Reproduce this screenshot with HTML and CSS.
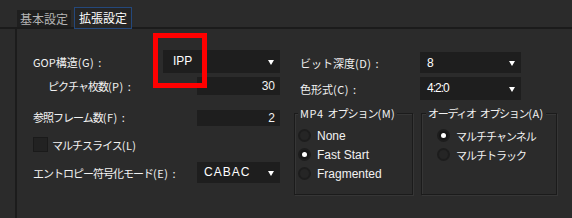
FILE: index.html
```html
<!DOCTYPE html>
<html lang="ja">
<head>
<meta charset="utf-8">
<title>拡張設定</title>
<link rel="stylesheet" href="styles.css">
</head>
<body>

<div class="tabs">
  <span class="tab">基本設定</span>
  <span class="tab active">拡張設定</span>
</div>

<div class="panel">

  <div class="col-left">
    <div class="row row-gop">
      <span class="label">GOP構造<span class="key">(G) :</span></span>
      <div class="select select-gop">IPP<i class="arrow"></i></div>
    </div>
    <div class="row row-pics">
      <span class="label tight indent">ピクチャ枚数<span class="key">(P) :</span></span>
      <div class="num">30</div>
    </div>
    <div class="row row-ref">
      <span class="label tight">参照フレーム数<span class="key">(F) :</span></span>
      <div class="num">2</div>
    </div>
    <div class="row row-check">
      <span class="checkbox"></span>
      <span class="label tight">マルチスライス<span class="key">(L)</span></span>
    </div>
    <div class="row row-entropy">
      <span class="label tight">エントロピー符号化モード<span class="key">(E) :</span></span>
      <div class="select select-entropy">CABAC<i class="arrow"></i></div>
    </div>
  </div>

  <div class="col-right">
    <div class="row row-depth">
      <span class="label">ビット深度<span class="key">(D) :</span></span>
      <div class="select select-right">8<i class="arrow"></i></div>
    </div>
    <div class="row row-color">
      <span class="label">色形式<span class="key">(C) :</span></span>
      <div class="select select-right narrow">4:2:0<i class="arrow"></i></div>
    </div>

    <div class="groups">
      <div class="group group-mp4">
        <span class="group-title tight"><span class="key">MP4 </span>オプション<span class="key">(M)</span></span>
        <div class="radio"><span class="dot"></span>None</div>
        <div class="radio"><span class="dot on"></span>Fast Start</div>
        <div class="radio"><span class="dot"></span>Fragmented</div>
      </div>
      <div class="group group-audio">
        <span class="group-title tight">オーディオ<span class="key"> </span>オプション<span class="key">(A)</span></span>
        <div class="radio tight"><span class="dot on"></span>マルチチャンネル</div>
        <div class="radio tight"><span class="dot"></span>マルチトラック</div>
      </div>
    </div>
  </div>

  <!-- red annotation box drawn over the GOP dropdown -->
  <div class="highlight"></div>

</div>

</body>
</html>
```

FILE: styles.css
```css
html, body {
  margin: 0;
  padding: 0;
}
body {
  width: 572px;
  height: 218px;
  overflow: hidden;
  background-color: #2b2b2b;
  color: #f2f2f2;
  font-family: "Noto Sans CJK JP", "Noto Sans", sans-serif;
  font-size: 11px;
  line-height: 14px;
}
.tight {
  letter-spacing: -1px;
}
/* latin accelerator part of a label, e.g. "(G) :" */
.key {
  letter-spacing: 0.5px;
  word-spacing: 1px;
}

/* tab strip */
.tabs {
  display: flex;
  align-items: flex-end;
  gap: 3px;
  height: 27px;
  padding-left: 17px;
  border-bottom: 2px solid #1b1b1b;
  font-size: 12px;
}
.tab {
  height: 17px;
  padding: 0 3px;
  background-color: #1f1f1f;
  color: #b4b4b4;
  line-height: 17px;
}
.tab.active {
  height: 20px;
  margin-bottom: -2px;
  padding: 0 4px;
  border: 1px solid #24487c;
  background-color: #262626;
  color: #ffffff;
  line-height: 20px;
}

/* panel */
.panel {
  position: relative;
  display: flex;
  height: 189px;
  margin-left: 15px;
  border-left: 2px solid #1c1c1c;
}

.row {
  display: flex;
  align-items: center;
}
.label {
  white-space: nowrap;
}
.indent {
  padding-left: 15px;
}

/* left column */
.col-left {
  width: 247px;
  padding: 21px 0 0 16px;
}
.row-gop {
  height: 23px;
}
.row-gop .label {
  width: 130px;
}
.row-pics {
  height: 18px;
  margin-top: 4px;
}
.row-ref {
  height: 16px;
  margin-top: 15px;
  align-items: flex-start;
}
.row-check {
  height: 15px;
  margin-top: 11px;
}
.row-entropy {
  height: 21px;
  margin-top: 10px;
}

.select {
  position: relative;
  box-sizing: border-box;
  height: 100%;
  background-color: #1e1e1e;
  font-family: "Liberation Sans", sans-serif;
  font-size: 12px;
  line-height: 23px;
  color: #ffffff;
}
.select-gop {
  width: 117px;
  padding-left: 10px;
}
.select-entropy {
  width: 83px;
  margin-left: auto;
  padding-left: 7px;
  line-height: 21px;
  letter-spacing: 1px;
}
.arrow {
  position: absolute;
  right: 6px;
  top: 50%;
  margin-top: -2px;
  border-left: 3px solid transparent;
  border-right: 3px solid transparent;
  border-top: 5px solid #ffffff;
}
.num {
  box-sizing: border-box;
  width: 83px;
  height: 100%;
  margin-left: auto;
  padding-right: 5px;
  background-color: #1e1e1e;
  font-family: "Liberation Sans", sans-serif;
  font-size: 12px;
  text-align: right;
  line-height: 18px;
}
.row-ref .num {
  line-height: 16px;
}
.checkbox {
  box-sizing: border-box;
  width: 15px;
  height: 15px;
  margin-right: 4px;
  background-color: #222222;
  border: 1px solid #1a1a1a;
}

/* right column */
.col-right {
  width: 263px;
  margin-left: 14px;
  padding-top: 23px;
}
.col-right .label {
  width: 120px;
  padding-left: 6px;
}
.row-depth {
  height: 21px;
}
.row-color {
  height: 23px;
  margin-top: 4px;
}
.select-right {
  width: 101px;
  padding-left: 7px;
  line-height: 22px;
}
.select-right.narrow {
  letter-spacing: -1px;
}

.groups {
  display: flex;
  gap: 8px;
  margin-top: 13px;
}
.group {
  box-sizing: border-box;
  height: 82px;
  border: 1px solid #1b1b1b;
  box-shadow: inset 1px 1px 0 #363636, 1px 1px 0 #363636;
}
.group-mp4 {
  width: 119px;
  padding-left: 3px;
}
.group-audio {
  width: 136px;
  padding-left: 15px;
}
.group-title {
  display: block;
  width: fit-content;
  margin: -8px 0 0 0;
  padding: 0 2px;
  background-color: #2b2b2b;
  white-space: nowrap;
}
.group-audio .group-title {
  margin-left: -11px;
  letter-spacing: -1.3px;
}
.radio {
  display: flex;
  align-items: center;
  height: 13px;
  margin-top: 6px;
  font-family: "Liberation Sans", "Noto Sans CJK JP", sans-serif;
  font-size: 12px;
  white-space: nowrap;
}
.radio.tight {
  font-family: "Noto Sans CJK JP", sans-serif;
  font-size: 11px;
}
.group-title + .radio {
  margin-top: 9px;
}
.dot {
  position: relative;
  flex: none;
  box-sizing: border-box;
  width: 13px;
  height: 13px;
  margin-right: 6px;
  border-radius: 50%;
  border: 2px solid #1d1d1d;
  background-color: #252525;
}
.dot.on {
  background-color: #161616;
}
.dot.on::after {
  content: "";
  position: absolute;
  left: 2px;
  top: 2px;
  width: 5px;
  height: 5px;
  border-radius: 50%;
  background-color: #ffffff;
}

/* annotation */
.highlight {
  position: absolute;
  left: 136px;
  top: 4px;
  width: 44px;
  height: 45px;
  border: 5px solid #ff0000;
}
```
